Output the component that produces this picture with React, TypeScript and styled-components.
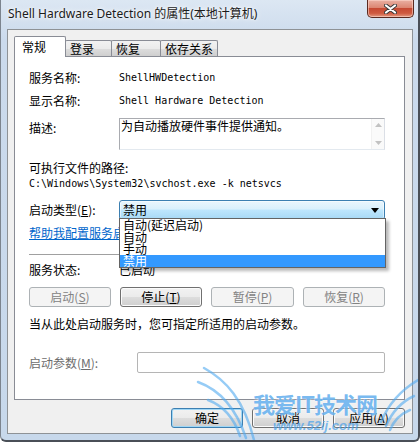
import React from 'react';
import styled, { createGlobalStyle, css } from 'styled-components';

const cjk = `"Noto Sans CJK SC", "Noto Sans", sans-serif`;
const mono = `"DejaVu Sans Mono", "Liberation Mono", monospace`;

const GlobalStyle = createGlobalStyle`
  html, body { margin: 0; padding: 0; width: 420px; height: 442px; overflow: hidden; background: #fff; }
  body { font-family: ${cjk}; font-size: 12px; line-height: 16px; color: #000; }
  * { box-sizing: border-box; }
`;

const Window = styled.div`
  position: relative;
  width: 420px;
  height: 442px;
  display: flex;
  flex-direction: column;
  background: linear-gradient(to bottom, #dce7f3 0px, #cbdaec 40px, #c7d8eb 100%);
  border-left: 1px solid #7c848e;
  border-right: 2px solid #4a4f57;
  border-bottom: 2px solid #4a4f57;
  border-bottom-left-radius: 6px;
  border-bottom-right-radius: 6px;
  padding: 0 5px 6px 6px;
  overflow: hidden;
`;

const TitleBar = styled.div`
  height: 29px;
  flex: none;
  display: flex;
  align-items: flex-start;
  justify-content: space-between;
  padding-left: 1px;
`;

const TitleText = styled.div`
  margin-top: 6px;
  font-family: "Noto Sans", ${cjk};
  font-size: 12px;
  line-height: 16px;
  color: #1b1b1b;
  text-shadow: 0 0 6px #fff, 0 0 3px #fff;
  white-space: nowrap;
`;

const CloseButton = styled.div`
  width: 47px;
  height: 18px;
  margin-right: -1px;
  display: flex;
  align-items: center;
  justify-content: center;
  border: 1px solid #5a2a20;
  border-top: none;
  border-radius: 0 0 5px 5px;
  background: linear-gradient(to bottom, #eab0a3 0%, #dc8672 45%, #c64a33 50%, #cf5a40 78%, #e39a82 100%);
  box-shadow: inset 0 0 0 1px rgba(255, 220, 210, 0.55);
`;

const Client = styled.div`
  flex: 1;
  display: flex;
  flex-direction: column;
  background: #f0f0f0;
  border: 1px solid #8e9296;
  padding: 6px 7px 5px 6px;
`;

const TabStrip = styled.div`
  height: 20px;
  flex: none;
  display: flex;
  align-items: flex-end;
`;

const Tab = styled.div<{ $active?: boolean; $w: number }>`
  width: ${p => p.$w}px;
  border: 1px solid #898c95;
  border-bottom: none;
  white-space: nowrap;
  font-size: 12px;
  ${p =>
    p.$active
      ? css`
          position: relative;
          z-index: 2;
          height: 21px;
          margin-bottom: -1px;
          background: #fff;
          padding: 2px 0 0 7px;
          line-height: 16px;
          border-radius: 2px 2px 0 0;
        `
      : css`
          height: 16px;
          margin-left: -1px;
          background: linear-gradient(to bottom, #f2f2f2 0%, #ebebeb 50%, #dddddd 51%, #cfcfcf 100%);
          padding: 0 0 0 4px;
          line-height: 16px;
          border-radius: 2px 2px 0 0;
        `}
`;

const Panel = styled.div`
  flex: 1;
  display: flex;
  flex-direction: column;
  background: #fff;
  border: 1px solid #898c95;
  padding: 13px 19px 0 14px;
`;

const Row = styled.div<{ $mt?: number; $h?: number; $align?: string }>`
  display: flex;
  align-items: ${p => p.$align || 'center'};
  margin-top: ${p => p.$mt || 0}px;
  height: ${p => p.$h || 16}px;
  flex: none;
  position: relative;
`;

const Label = styled.span<{ $w?: number; $disabled?: boolean; $mt?: number }>`
  width: ${p => p.$w || 90}px;
  flex: none;
  white-space: nowrap;
  color: ${p => (p.$disabled ? '#6d6d6d' : '#000')};
  margin-top: ${p => p.$mt || 0}px;
`;

const MonoValue = styled.span`
  font-family: ${mono};
  font-size: 10px;
  line-height: 16px;
  white-space: nowrap;
  color: #000;
`;

const Plain = styled.span`
  white-space: nowrap;
`;

const DescBox = styled.div`
  width: 266px;
  height: 32px;
  display: flex;
  border: 1px solid #a9abb0;
  border-bottom-color: #e3e9ef;
  border-right-color: #dbdfe6;
  background: #fff;
`;

const DescText = styled.div`
  flex: 1;
  padding: 0 1px;
  line-height: 14px;
  white-space: nowrap;
`;

const ScrollTrack = styled.div`
  width: 13px;
  display: flex;
  flex-direction: column;
  justify-content: space-between;
  align-items: center;
  padding: 4px 0 4px;
  background: #fafafa;
  border-left: 1px solid #f1f1f1;
`;

const Combo = styled.div`
  position: relative;
  width: 266px;
  height: 20px;
  display: flex;
  align-items: center;
  justify-content: space-between;
  padding: 0 5px 0 3px;
  border: 1px solid #3c7fb1;
  border-radius: 3px;
  background: linear-gradient(to bottom, #eaf6fd 0%, #d9f0fc 45%, #bee6fd 50%, #a7d9f5 100%);
  box-shadow: inset 0 0 0 1px rgba(255, 255, 255, 0.5);
`;

const DropList = styled.div`
  position: absolute;
  top: calc(100% - 1px);
  left: -1px;
  width: 267px;
  z-index: 5;
  background: #fff;
  border: 1px solid #646464;
  box-shadow: 3px 3px 3px rgba(0, 0, 0, 0.28);
`;

const DropItem = styled.div<{ $selected?: boolean }>`
  height: 12px;
  line-height: 12px;
  padding-left: 3px;
  white-space: nowrap;
  background: ${p => (p.$selected ? '#3399ff' : 'transparent')};
  color: ${p => (p.$selected ? '#fff' : '#000')};
`;

const Link = styled.a`
  color: #0066cc;
  text-decoration: underline;
  white-space: nowrap;
  cursor: pointer;
`;

const Separator = styled.div<{ $mt: number }>`
  margin-top: ${p => p.$mt}px;
  height: 1px;
  flex: none;
  background: #a0a0a0;
`;

const ButtonRow = styled.div<{ $mt?: number; $justify?: string; $gap?: number }>`
  display: flex;
  justify-content: ${p => p.$justify || 'space-between'};
  gap: ${p => p.$gap || 0}px;
  margin-top: ${p => p.$mt || 0}px;
  flex: none;
  height: 20px;
`;

const Button = styled.div<{ $w: number; $disabled?: boolean; $default?: boolean }>`
  width: ${p => p.$w}px;
  height: 20px;
  display: flex;
  align-items: center;
  justify-content: center;
  border-radius: 3px;
  white-space: nowrap;
  line-height: 16px;
  ${p =>
    p.$disabled
      ? css`
          border: 1px solid #adb2b5;
          background: #f4f4f4;
          color: #838383;
        `
      : p.$default
      ? css`
          border: 1px solid #3c7fb1;
          background: linear-gradient(to bottom, #f2f2f2 0%, #ebebeb 50%, #dddddd 51%, #cfcfcf 100%);
          box-shadow: inset 0 0 0 1px #9fd7f6;
          color: #000;
        `
      : css`
          border: 1px solid #707070;
          background: linear-gradient(to bottom, #f2f2f2 0%, #ebebeb 50%, #dddddd 51%, #cfcfcf 100%);
          box-shadow: inset 0 0 0 1px #fbfbfb;
          color: #000;
        `}
`;

const ParamInput = styled.div`
  flex: 1;
  height: 21px;
  border: 1px solid #b5b5b5;
  border-radius: 2px;
  background: #fff;
`;

const BottomRow = styled(ButtonRow)`
  margin-top: 8px;
`;

const Watermark = styled.div`
  position: absolute;
  left: 195px;
  top: 360px;
  width: 225px;
  height: 82px;
  pointer-events: none;
  z-index: 10;
`;

const WmTitle = styled.div`
  position: absolute;
  left: 57px;
  top: 30px;
  font-family: ${cjk};
  font-weight: 700;
  font-size: 22px;
  line-height: 26px;
  letter-spacing: -1px;
  color: rgba(70, 160, 235, 0.72);
  text-shadow: 0 0 2px rgba(255, 255, 255, 0.9);
  white-space: nowrap;
`;

const WmUrl = styled.div`
  position: absolute;
  left: 77px;
  top: 59px;
  font-family: "Liberation Sans", sans-serif;
  font-style: italic;
  font-weight: 700;
  font-size: 13px;
  line-height: 14px;
  color: rgba(70, 160, 235, 0.7);
  white-space: nowrap;
`;

const WmSvg = styled.svg`
  position: absolute;
  left: 0;
  top: 0;
`;

const Arrow = ({ up }: { up?: boolean }) => (
  <svg width="7" height="4" viewBox="0 0 7 4">
    <path d={up ? 'M0 4 L3.5 0 L7 4 Z' : 'M0 0 L7 0 L3.5 4 Z'} fill="#c2c2c2" />
  </svg>
);

export default function App() {
  return (
    <>
      <GlobalStyle />
      <Window>
        <TitleBar>
          <TitleText>Shell Hardware Detection 的属性(本地计算机)</TitleText>
          <CloseButton>
            <svg width="13" height="10" viewBox="0 0 13 10">
              <path d="M2 1.5 L11 8.5 M11 1.5 L2 8.5" stroke="#3a3a3a" strokeWidth="4" strokeLinecap="round" />
              <path d="M2 1.5 L11 8.5 M11 1.5 L2 8.5" stroke="#fff" strokeWidth="2.2" strokeLinecap="round" />
            </svg>
          </CloseButton>
        </TitleBar>
        <Client>
          <TabStrip>
            <Tab $active $w={52}>常规</Tab>
            <Tab $w={47}>登录</Tab>
            <Tab $w={50}>恢复</Tab>
            <Tab $w={58}>依存关系</Tab>
          </TabStrip>
          <Panel>
            <Row>
              <Label>服务名称:</Label>
              <MonoValue>ShellHWDetection</MonoValue>
            </Row>
            <Row $mt={7}>
              <Label>显示名称:</Label>
              <MonoValue>Shell Hardware Detection</MonoValue>
            </Row>
            <Row $mt={9} $h={32} $align="flex-start">
              <Label $mt={2}>描述:</Label>
              <DescBox>
                <DescText>为自动播放硬件事件提供通知。</DescText>
                <ScrollTrack>
                  <Arrow up />
                  <Arrow />
                </ScrollTrack>
              </DescBox>
            </Row>
            <Row $mt={10}>
              <Plain>可执行文件的路径:</Plain>
            </Row>
            <Row>
              <MonoValue>C:\Windows\System32\svchost.exe -k netsvcs</MonoValue>
            </Row>
            <Row $mt={8} $h={20}>
              <Label>
                启动类型(<u>E</u>):
              </Label>
              <Combo>
                <Plain>禁用</Plain>
                <svg width="8" height="5" viewBox="0 0 8 5">
                  <path d="M0 0 L8 0 L4 5 Z" fill="#000" />
                </svg>
                <DropList>
                  <DropItem>自动(延迟启动)</DropItem>
                  <DropItem>自动</DropItem>
                  <DropItem>手动</DropItem>
                  <DropItem $selected>禁用</DropItem>
                </DropList>
              </Combo>
            </Row>
            <Row $mt={5}>
              <Link>帮助我配置服务启动选项。</Link>
            </Row>
            <Separator $mt={13} />
            <Row $mt={7}>
              <Label>服务状态:</Label>
              <Plain>已启动</Plain>
            </Row>
            <ButtonRow $mt={9}>
              <Button $w={82} $disabled>
                启动(<u>S</u>)
              </Button>
              <Button $w={82}>
                停止(<u>T</u>)
              </Button>
              <Button $w={83} $disabled>
                暂停(<u>P</u>)
              </Button>
              <Button $w={82} $disabled>
                恢复(<u>R</u>)
              </Button>
            </ButtonRow>
            <Row $mt={9}>
              <Plain>当从此处启动服务时，您可指定所适用的启动参数。</Plain>
            </Row>
            <Row $mt={20} $h={21}>
              <Label $w={108} $disabled>
                启动参数(<u>M</u>):
              </Label>
              <ParamInput />
            </Row>
          </Panel>
          <BottomRow $justify="flex-end" $gap={9}>
            <Button $w={72} $default>确定</Button>
            <Button $w={72}>取消</Button>
            <Button $w={72}>
              应用(<u>A</u>)
            </Button>
          </BottomRow>
        </Client>
        <Watermark>
          <WmSvg width="225" height="82" viewBox="0 0 225 82">
            <g fill="none" stroke="rgba(80,170,240,0.6)" strokeWidth="2.5" strokeLinecap="round">
              <path d="M8 8 C30 20 48 40 58 80" />
              <path d="M2 22 C24 30 40 48 50 78" />
              <path d="M12 40 C28 46 38 58 44 76" />
              <path d="M222 20 C205 30 192 45 185 62" />
              <path d="M218 36 C205 42 196 52 190 66" />
              <path d="M214 50 C204 54 198 60 194 70" />
            </g>
          </WmSvg>
          <WmTitle>我爱IT技术网</WmTitle>
          <WmUrl>www.52ij.com</WmUrl>
        </Watermark>
      </Window>
    </>
  );
}
